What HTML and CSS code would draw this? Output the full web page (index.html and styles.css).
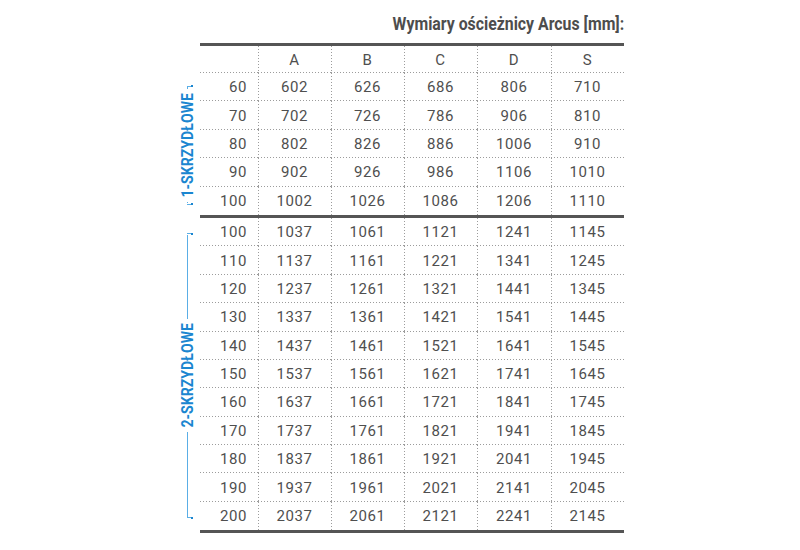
FILE: index.html
```html
<!DOCTYPE html>
<html lang="pl">
<head>
<meta charset="utf-8">
<title>Wymiary ościeżnicy Arcus</title>
<link rel="stylesheet" href="styles.css">
</head>
<body>
<div class="wrap">
  <h1 class="title"><span>Wymiary ościeżnicy Arcus [mm]:</span></h1>
  <table class="dims">
    <colgroup>
      <col class="w-side"><col class="w-rl"><col class="w-c"><col class="w-c"><col class="w-c"><col class="w-c4"><col class="w-c">
    </colgroup>
    <thead>
      <tr class="head">
        <th class="side"></th><th class="rl"></th><th class="c">A</th><th class="c">B</th><th class="c">C</th><th class="c">D</th><th class="c">S</th>
      </tr>
    </thead>
    <tbody>
      <tr>
        <td class="side" rowspan="5">
          <div class="bracket b1">
            <div class="tick"><i></i><b></b></div>
            <div class="seg"></div>
            <div class="label">1-SKRZYDŁOWE</div>
            <div class="seg"></div>
            <div class="tick"><i></i><b></b></div>
          </div>
        </td>
        <td class="rl">60</td><td class="c">602</td><td class="c">626</td><td class="c">686</td><td class="c">806</td><td class="c">710</td>
      </tr>
      <tr><td class="rl">70</td><td class="c">702</td><td class="c">726</td><td class="c">786</td><td class="c">906</td><td class="c">810</td></tr>
      <tr><td class="rl">80</td><td class="c">802</td><td class="c">826</td><td class="c">886</td><td class="c">1006</td><td class="c">910</td></tr>
      <tr><td class="rl">90</td><td class="c">902</td><td class="c">926</td><td class="c">986</td><td class="c">1106</td><td class="c">1010</td></tr>
      <tr class="last"><td class="rl">100</td><td class="c">1002</td><td class="c">1026</td><td class="c">1086</td><td class="c">1206</td><td class="c">1110</td></tr>
      <tr>
        <td class="side" rowspan="11">
          <div class="bracket b2">
            <div class="tick"><i></i><b></b></div>
            <div class="seg"></div>
            <div class="label">2-SKRZYDŁOWE</div>
            <div class="seg"></div>
            <div class="tick"><i></i><b></b></div>
          </div>
        </td>
        <td class="rl">100</td><td class="c">1037</td><td class="c">1061</td><td class="c">1121</td><td class="c">1241</td><td class="c">1145</td>
      </tr>
      <tr><td class="rl">110</td><td class="c">1137</td><td class="c">1161</td><td class="c">1221</td><td class="c">1341</td><td class="c">1245</td></tr>
      <tr><td class="rl">120</td><td class="c">1237</td><td class="c">1261</td><td class="c">1321</td><td class="c">1441</td><td class="c">1345</td></tr>
      <tr><td class="rl">130</td><td class="c">1337</td><td class="c">1361</td><td class="c">1421</td><td class="c">1541</td><td class="c">1445</td></tr>
      <tr><td class="rl">140</td><td class="c">1437</td><td class="c">1461</td><td class="c">1521</td><td class="c">1641</td><td class="c">1545</td></tr>
      <tr><td class="rl">150</td><td class="c">1537</td><td class="c">1561</td><td class="c">1621</td><td class="c">1741</td><td class="c">1645</td></tr>
      <tr><td class="rl">160</td><td class="c">1637</td><td class="c">1661</td><td class="c">1721</td><td class="c">1841</td><td class="c">1745</td></tr>
      <tr><td class="rl">170</td><td class="c">1737</td><td class="c">1761</td><td class="c">1821</td><td class="c">1941</td><td class="c">1845</td></tr>
      <tr><td class="rl">180</td><td class="c">1837</td><td class="c">1861</td><td class="c">1921</td><td class="c">2041</td><td class="c">1945</td></tr>
      <tr><td class="rl">190</td><td class="c">1937</td><td class="c">1961</td><td class="c">2021</td><td class="c">2141</td><td class="c">2045</td></tr>
      <tr class="last"><td class="rl">200</td><td class="c">2037</td><td class="c">2061</td><td class="c">2121</td><td class="c">2241</td><td class="c">2145</td></tr>
    </tbody>
  </table>
</div>
</body>
</html>
```
FILE: styles.css
```css
html, body {
  margin: 0;
  padding: 0;
  background: #ffffff;
}

body {
  font-family: Roboto, "Liberation Sans", sans-serif;
  color: #555555;
}

.wrap {
  width: 448px;
  margin-left: 176px;
  padding-top: 14px;
}

.title {
  margin: 0 0 9px 0;
  font-size: 18px;
  line-height: 20px;
  font-weight: 700;
  color: #4d4d4d;
  text-align: right;
}

.title span {
  display: inline-block;
  transform: scaleX(0.88);
  transform-origin: right center;
  white-space: nowrap;
}

.dims {
  border-collapse: separate;
  border-spacing: 0;
  table-layout: fixed;
  width: 448px;
  font-size: 15px;
  letter-spacing: 0.6px;
}

.w-side { width: 24px; }
.w-rl { width: 58px; }
.w-c { width: 73px; }
.w-c4 { width: 74px; }

.dims th,
.dims td {
  padding: 0;
  font-weight: 400;
  height: 28.4px;
  box-sizing: border-box;
  vertical-align: middle;
  color: #4f4f4f;
}

.dims .head th {
  height: 30px;
  border-top: 3px solid #555555;
}

.dims .head th.side {
  border-top: 0;
}

.dims .c {
  text-align: center;
  background-image:
    linear-gradient(to right, #9c9c9c 1px, transparent 1px),
    linear-gradient(to bottom, #9c9c9c 1px, transparent 1px);
  background-size: 3px 1px, 1px 3px;
  background-position: left bottom, left top;
  background-repeat: repeat-x, repeat-y;
}

.dims .rl {
  text-align: right;
  padding-right: 11px;
  background-image: linear-gradient(to right, #9c9c9c 1px, transparent 1px);
  background-size: 3px 1px;
  background-position: left bottom;
  background-repeat: repeat-x;
}

.dims .last td.rl,
.dims .last td.c {
  height: 31.4px;
  border-bottom: 3px solid #555555;
}

.dims .last td.rl {
  background-image: none;
}

.dims .last td.c {
  background-image: linear-gradient(to bottom, #9c9c9c 1px, transparent 1px);
  background-size: 1px 3px;
  background-position: left top;
  background-repeat: repeat-y;
}

.dims td.side,
.dims th.side {
  background: none;
  border: 0;
  height: auto;
}

.bracket {
  display: flex;
  flex-direction: column;
  width: 24px;
}

.b1 { height: 120px; }
.b2 { height: 286px; }

.tick {
  display: flex;
  align-items: center;
  margin-left: 11px;
  height: 2px;
}

.tick i {
  display: block;
  width: 4px;
  height: 1px;
  background: #5aaee6;
}

.tick b {
  display: block;
  width: 2px;
  height: 2px;
  background: #1b86d0;
}

.seg {
  flex: 1;
  width: 1px;
  margin-left: 11px;
  background: #5aaee6;
  min-height: 1px;
}

.label {
  align-self: center;
  writing-mode: vertical-rl;
  transform: rotate(180deg) scaleY(0.88);
  font-size: 16px;
  line-height: 16px;
  font-weight: 700;
  letter-spacing: 0;
  color: #1b86d0;
  white-space: nowrap;
  margin: -3px 0;
}
```
